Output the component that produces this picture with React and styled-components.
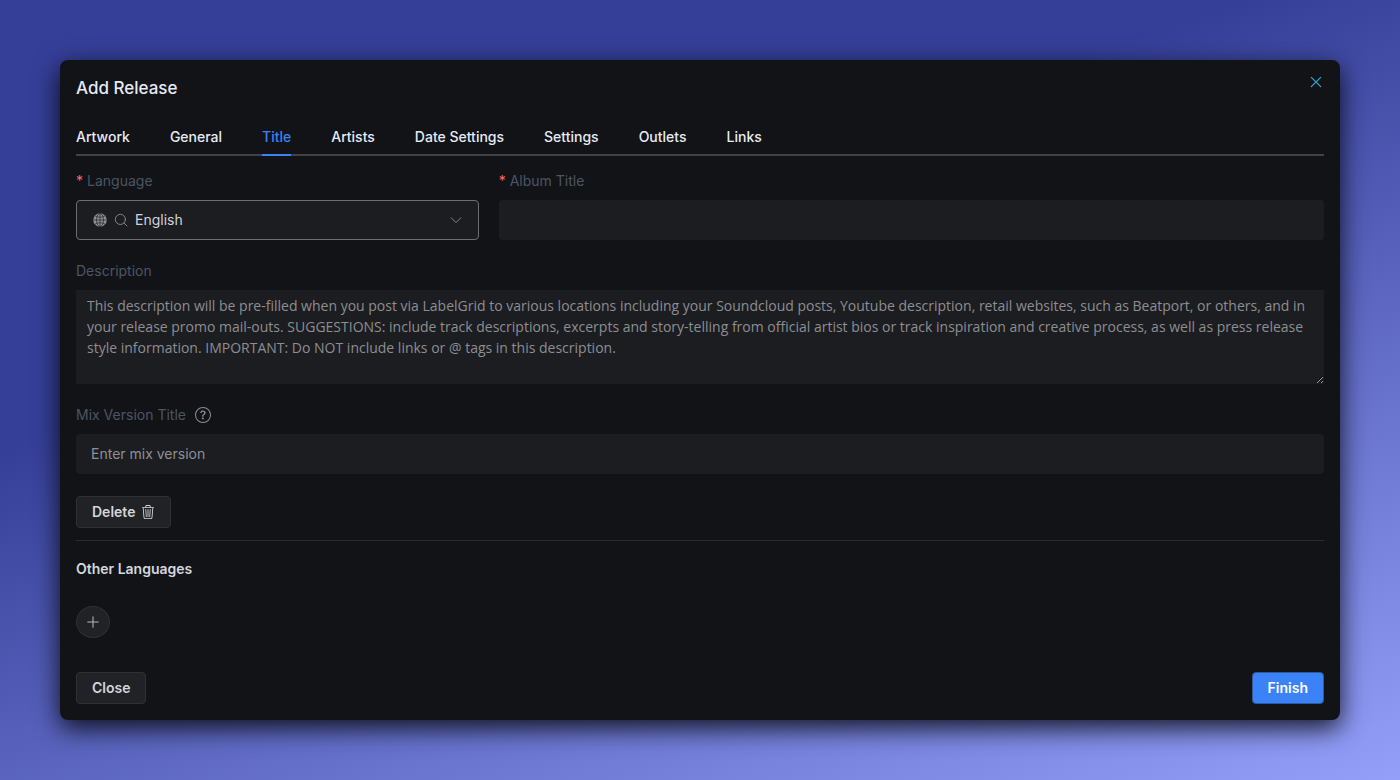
import React, { useState } from 'react';
import styled, { createGlobalStyle } from 'styled-components';
import { BsQuestionCircle, BsTrash3 } from 'react-icons/bs';

const tabs = ['Artwork', 'General', 'Title', 'Artists', 'Date Settings', 'Settings', 'Outlets', 'Links']

const descriptionHint = 'This description will be pre-filled when you post via LabelGrid to various locations including your Soundcloud posts, Youtube description, retail websites, such as Beatport, or others, and in your release promo mail-outs. SUGGESTIONS: include track descriptions, excerpts and story-telling from official artist bios or track inspiration and creative process, as well as press release style information. IMPORTANT: Do NOT include links or @ tags in this description.'

function LineIcon({ size, children }) {
    return (
        <svg width={size} height={size} viewBox="0 0 16 16" fill="none" stroke="currentColor" strokeLinecap="round" strokeLinejoin="round" aria-hidden="true">
            {children}
        </svg>
    )
}

function GlobeIcon() {
    return (
        <svg width="14" height="14" viewBox="0 0 28 28" fill="none" stroke="#1c1d21" strokeWidth="1.3" aria-hidden="true">
            <circle cx="14" cy="14" r="13.5" fill="currentColor" stroke="none" />
            <path d="M14 1v26M1 14h26M4 5.5c6 4 14 4 20 0M4 22.5c6-4 14-4 20 0" />
            <ellipse cx="14" cy="14" rx="7" ry="13" />
        </svg>
    )
}

function App() {
    const [active, setActive] = useState('Title')

    return (
        <Page>
            <GlobalStyle />
            <Modal role="dialog" aria-labelledby="dialog-title">
                <Header>
                    <Heading id="dialog-title">Add Release</Heading>
                    <CloseIcon type="button" aria-label="Close dialog">
                        <LineIcon size={16}><path strokeWidth="1.2" d="M3.3 3.3l9.4 9.4M12.7 3.3l-9.4 9.4" /></LineIcon>
                    </CloseIcon>
                </Header>

                <TabList role="tablist">
                    {tabs.map((tab) => (
                        <Tab
                            key={tab}
                            type="button"
                            role="tab"
                            aria-selected={tab === active}
                            $active={tab === active}
                            onClick={() => setActive(tab)}
                        >
                            {tab}
                        </Tab>
                    ))}
                </TabList>

                <Form>
                    <Field>
                        <Label htmlFor="language" $required>Language</Label>
                        <SelectBox>
                            <GlobeIcon />
                            <LineIcon size={14}><circle cx="7.3" cy="7.3" r="5.8" /><path d="M11.5 11.5l3.3 3.3" /></LineIcon>
                            <Select id="language" defaultValue="English">
                                <option>English</option>
                            </Select>
                            <LineIcon size={14}><path d="M2.5 5.5L8 11l5.5-5.5" /></LineIcon>
                        </SelectBox>
                    </Field>
                    <Field $span={2}>
                        <Label htmlFor="album" $required>Album Title</Label>
                        <Input id="album" type="text" required />
                    </Field>
                    <Field $span={3}>
                        <Label htmlFor="description">Description</Label>
                        <Textarea id="description" placeholder={descriptionHint} />
                    </Field>
                    <Field $span={3}>
                        <LabelRow>
                            <Label htmlFor="mix">Mix Version Title</Label>
                            <BsQuestionCircle size={16} aria-hidden="true" />
                        </LabelRow>
                        <Input id="mix" type="text" placeholder="Enter mix version" />
                    </Field>
                </Form>

                <DeleteRow>
                    <Button type="button">Delete <BsTrash3 size={14} aria-hidden="true" /></Button>
                </DeleteRow>

                <Subheading>Other Languages</Subheading>
                <AddButton type="button" aria-label="Add language">
                    <LineIcon size={14}><path strokeWidth="1.2" d="M8 2v12M2 8h12" /></LineIcon>
                </AddButton>

                <Footer>
                    <Button type="button">Close</Button>
                    <Button type="button" $primary>Finish</Button>
                </Footer>
            </Modal>
        </Page>
    )
}

export default App;

const GlobalStyle = createGlobalStyle`
    * {
        box-sizing: border-box;
    }
    body {
        margin: 0;
    }
    body, button, input, select, textarea {
        font-family: Inter, "Liberation Sans", sans-serif;
        font-size: 14px;
    }
`

const Page = styled.main`
    min-height: 100vh;
    padding: 60px;
    background: linear-gradient(160deg, #353f98 35%, #949ffa 100%);
`

const Modal = styled.section`
    padding: 14px 16px 16px;
    border-radius: 8px;
    background: #121317;
    box-shadow: 0 8px 26px rgba(0,0,0,.85);
    color: #e5eaf3;
`

const Header = styled.header`
    display: flex;
    justify-content: space-between;
    align-items: flex-start;
`

const Heading = styled.h1`
    margin: 0;
    font-size: 17px;
    font-weight: 500;
    line-height: 28px;
`

const CloseIcon = styled.button`
    display: flex;
    padding: 0;
    border: none;
    background: none;
    color: #2fa9e0;
    cursor: pointer;
`

const TabList = styled.div`
    display: flex;
    gap: 40px;
    margin-top: 16px;
    box-shadow: inset 0 -2px 0 #414243;
`

const Tab = styled.button`
    height: 38px;
    padding: 0;
    border: none;
    border-bottom: 2px solid ${(props) => (props.$active ? '#3b82f6' : 'transparent')};
    background: none;
    color: ${(props) => (props.$active ? '#3b82f6' : '#e5eaf3')};
    font-weight: 500;
    cursor: pointer;
`

const Form = styled.form`
    display: grid;
    grid-template-columns: repeat(3, 1fr);
    gap: 20px;
    margin-top: 14px;
`

const Field = styled.div`
    display: flex;
    flex-direction: column;
    gap: 8px;
    min-width: 0;
    grid-column: span ${(props) => props.$span || 1};
`

const Label = styled.label`
    color: #4b5563;
    line-height: 22px;

    &::before {
        content: ${(props) => (props.$required ? "'*'" : 'none')};
        margin-right: 4px;
        color: #f56c6c;
    }
`

const LabelRow = styled.div`
    display: flex;
    align-items: center;
    gap: 9px;
    color: #8b8e96;
`

const SelectBox = styled.div`
    display: flex;
    align-items: center;
    gap: 7px;
    height: 40px;
    padding: 0 15px 0 16px;
    border: 1px solid #6c6e72;
    border-radius: 4px;
    background: #1c1d21;
    color: #8d9095;
`

const Select = styled.select`
    flex: 1;
    min-width: 0;
    height: 100%;
    padding: 0 0 1px;
    border: none;
    outline: none;
    appearance: none;
    background: #1c1d21;
    color: #cfd3dc;
`

const Input = styled.input`
    width: 100%;
    height: 40px;
    padding: 0 15px 1px;
    border: none;
    border-radius: 4px;
    background: #1c1d21;
    color: #cfd3dc;

    &::placeholder {
        color: #8d9095;
    }
`

const Textarea = styled.textarea`
    display: block;
    width: 100%;
    height: 94px;
    padding: 5px 11px;
    border: none;
    background: #1c1d21;
    color: #cfd3dc;
    font-family: "Open Sans", "Liberation Sans", sans-serif;
    line-height: 21px;
    resize: vertical;

    &::placeholder {
        color: #8d8e91;
    }
`

const Button = styled.button`
    display: inline-flex;
    align-items: center;
    gap: 6px;
    height: 32px;
    padding: 0 15px 1px;
    border: 1px solid ${(props) => (props.$primary ? '#2c5aa6' : '#303135')};
    border-radius: 4px;
    background: ${(props) => (props.$primary ? '#3b82f6' : '#212226')};
    color: ${(props) => (props.$primary ? '#ffffff' : '#d4d5d8')};
    font-weight: 600;
    cursor: pointer;
`

const DeleteRow = styled.div`
    display: flex;
    margin-top: 22px;
    padding-bottom: 12px;
    border-bottom: 1px solid #2b2c30;
`

const Subheading = styled.h2`
    margin: 17px 0 27px;
    font-size: 14px;
    font-weight: 600;
    line-height: 21px;
    color: #d3d7de;
`

const AddButton = styled.button`
    display: flex;
    align-items: center;
    justify-content: center;
    width: 34px;
    height: 32px;
    padding: 0;
    border: 1px solid #303135;
    border-radius: 50%;
    background: #212226;
    color: #b4b5b8;
    cursor: pointer;
`

const Footer = styled.footer`
    display: flex;
    justify-content: space-between;
    margin-top: 34px;
`
